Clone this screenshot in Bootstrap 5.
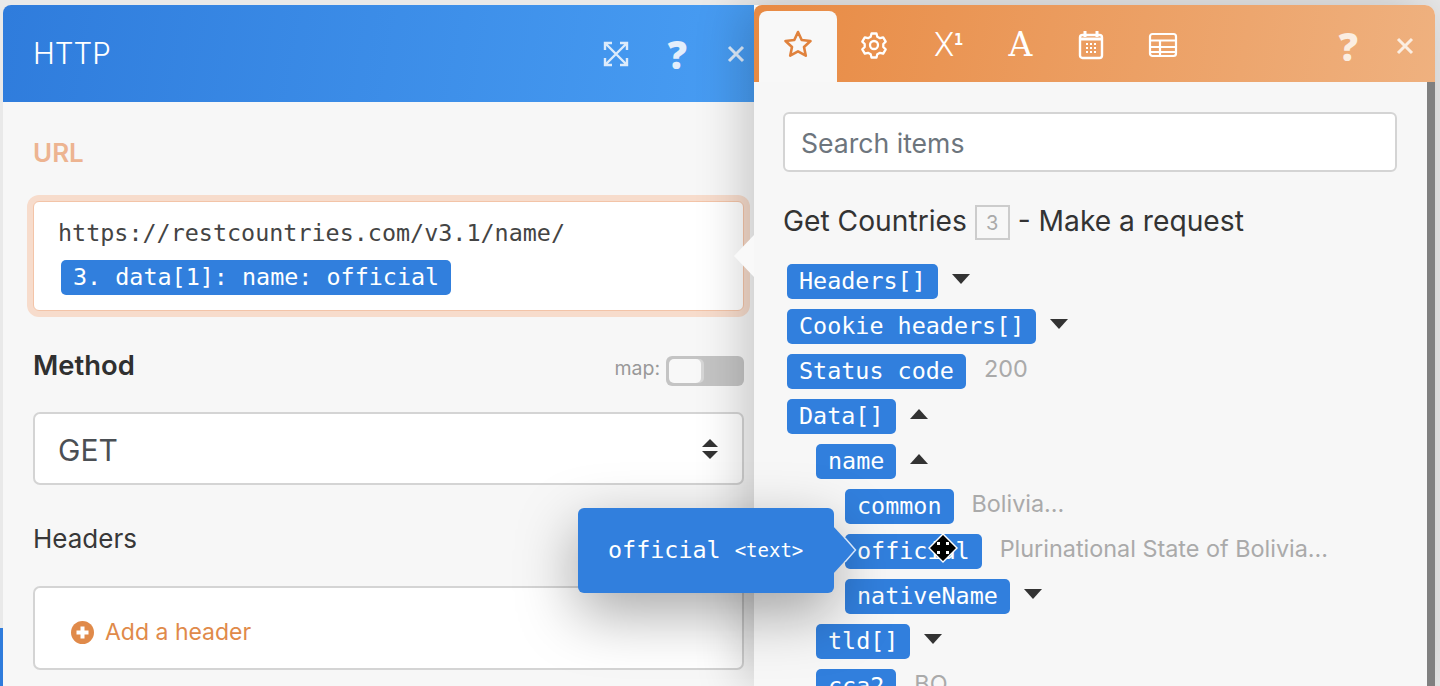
<!DOCTYPE html>
<html lang="en">
<head>
  <meta charset="UTF-8" />
  <meta name="viewport" content="width=device-width, initial-scale=1.0"/>
  <title>HTTP module mapping</title>
  <link href="https://cdn.jsdelivr.net/npm/bootstrap@5.3.3/dist/css/bootstrap.min.css" rel="stylesheet">
  <style>
    html, body { height: 686px; overflow: hidden; }
    body { background: #e9e9e9; font-family: Inter, "Noto Sans", sans-serif; color: #333; }
    .stage { height: 686px; padding: 5px 5px 0 3px; position: relative; }

    /* left window */
    .http-win { width: 751px; flex: none; background: #f7f7f7; border-top-left-radius: 8px; }
    .http-head { height: 97px; padding: 0 8px 0 30px; color: #fff; background: linear-gradient(100deg, #2f7cdc, #489df3); border-top-left-radius: 8px; }
    .http-title { font-size: 29.5px; font-weight: 300; }
    .head-tools { gap: 39px; }
    .http-body { padding: 36px 10px 0 30px; }
    .url-label { font-size: 26px; line-height: 30px; font-weight: 600; color: #edb491; margin-bottom: 33px; }
    .url-box { height: 110px; background: #fff; border: 1px solid #f3c4a8; border-radius: 6px; box-shadow: 0 0 0 6px #f7dccc; padding: 14px 24px 0; }
    .url-text { font-family: "DejaVu Sans Mono", monospace; font-size: 23.4px; line-height: 34px; color: #444; }
    .url-chip { margin: 10px 0 0 3px; }
    .field-row { height: 44px; margin-top: 32px; padding-top: 2px; }
    .field-bold { font-size: 27.4px; font-weight: 600; color: #303030; }
    .map-wrap { margin-top: 10px; }
    .map-lbl { font-size: 19.5px; color: #999; margin: -4px 2px 0 0; }
    .map-toggle { width: 78px; height: 30px; background: #c4c4c4; border-radius: 6px; padding: 3px; }
    .map-knob { width: 32px; height: 24px; background: #f8f8f8; border-radius: 5px; box-shadow: 3px 0 0 #d6d6d6; }
    .get-select.form-select { height: 73px; margin-top: 25px; font-size: 30px; color: #4b4f54; padding: 4px 0 0 23px; border: 2px solid #d4d4d4; border-radius: 7px;
      background-image: url("data:image/svg+xml,%3csvg xmlns='http://www.w3.org/2000/svg' viewBox='0 0 18 20'%3e%3cpath fill='%23333' d='M9 0l8 8H1zM9 20l-8-8h16z'/%3e%3c/svg%3e");
      background-size: 18px 20px; background-position: right 23px center; }
    .field-plain { font-size: 26px; color: #383838; margin-top: 37px; line-height: 34px; }
    .hdr-box { height: 84px; margin-top: 30px; background: #fff; border: 2px solid #d4d4d4; border-radius: 7px; padding: 8px 0 0 36px; color: #e08a4a; font-size: 23px; }
    .hdr-box svg { margin-right: 3px; }

    /* right window */
    .items-win { flex: 1; background: #f7f7f7; border-top-right-radius: 10px; box-shadow: -10px 0 50px rgba(0,0,0,.2); position: relative; }
    .items-head { height: 77px; padding: 6px 20px 0 5px; background: linear-gradient(100deg, #e88a43, #efb17f); border-top-right-radius: 10px; border-top-left-radius: 8px; }
    .tab-on { width: 78px; height: 71px; margin-right: 1px; padding-bottom: 5px; background: #f8f8f8; border-radius: 8px 8px 0 0; }
    .tab-off { width: 72px; height: 71px; padding-bottom: 4px; color: #fff; }
    .tab-glyph { padding-left: 5px; }
    .tab-svg { padding-left: 2px; }
    .tools-right { gap: 37px; }
    .glyph-x { font-family: Roboto, sans-serif; font-weight: 300; font-size: 33px; line-height: 1; color: #fff; }
    .glyph-x sup { font-family: "DejaVu Sans Mono", monospace; font-weight: 700; font-size: 15px; top: -.75em; }
    .glyph-a { font-family: "DejaVu Serif", serif; font-size: 33px; line-height: 1; color: #fff; }
    .q-mark { font-family: "Open Sans", sans-serif; font-weight: 800; font-size: 38px; line-height: 1; }
    .q-blue { color: #e3eefb; }
    .q-orange { color: #fbeee2; }
    .items-notch { position: absolute; left: -20px; top: 230px; width: 0; height: 0; border-top: 21px solid transparent; border-bottom: 21px solid transparent; border-right: 20px solid #f9f9f9; }
    .items-body { padding: 30px 38px 0 29px; }
    .item-search.form-control { height: 60px; font-size: 26.6px; padding: 2px 0 0 16px; border: 2px solid #d4d4d4; border-radius: 6px; color: #555; }
    .item-search.form-control::placeholder { color: #6d757d; }
    .src-title { font-size: 28.2px; margin: 31px 0 25px; height: 36px; line-height: 36px; color: #333; }
    .src-num { display: inline-block; width: 35px; height: 35px; margin-top: 2px; line-height: 33px; border: 2px solid #ccc; text-align: center; font-size: 20px; color: #aaa; vertical-align: top; }
    .tree { padding-left: 4px; }
    .tree-row { height: 35px; margin-bottom: 10px; }
    .ind-1 { padding-left: 29px; }
    .ind-2 { padding-left: 58px; }
    .chip { display: inline-block; height: 35px; line-height: 34px; padding: 0 12px; background: #317fdd; color: #fff; border-radius: 5px; font-family: "DejaVu Sans Mono", monospace; font-size: 23.4px; white-space: nowrap; }
    .val { margin: -5px 0 0 18px; font-size: 23.4px; color: #aaa; white-space: nowrap; }
    .caret-d, .caret-u { margin: -6px 0 0 14px; width: 0; height: 0; border-left: 9px solid transparent; border-right: 9px solid transparent; }
    .caret-d { border-top: 10px solid #333; }
    .caret-u { border-bottom: 10px solid #333; }
    .scroll-thumb { position: absolute; right: 0; top: 77px; bottom: 0; width: 8px; background: #808080; }

    /* hover tooltip and cursor */
    .map-tip { position: absolute; left: 578px; top: 508px; width: 256px; height: 85px; background: #317fdd; color: #fff; border-radius: 6px; padding-left: 30px; font-family: "DejaVu Sans Mono", monospace; font-size: 23.4px; box-shadow: 0 20px 60px rgba(0,0,0,.35); }
    .map-tip small { font-size: 19px; margin-left: 14px; }
    .tip-arrow { position: absolute; left: 833px; top: 526px; }
    .move-cur { position: absolute; left: 928px; top: 533px; }
    .edge-blue { position: absolute; left: 0; top: 628px; width: 3px; height: 58px; background: #2f7cdc; }
  </style>
</head>
<body>
  <div class="stage d-flex">
    <div class="edge-blue"></div>

    <div class="http-win">
      <div class="http-head d-flex align-items-center">
        <span class="http-title flex-grow-1">HTTP</span>
        <div class="head-tools d-flex align-items-center">
          <svg width="26" height="26" viewBox="0 0 26 26" fill="none" stroke="#dcebfb" stroke-width="2.4"><path d="M3 3 23 23M23 3 3 23M2 9V2h7M17 2h7v7M2 17v7h7M24 17v7h-7"/></svg>
          <span class="q-mark q-blue">?</span>
          <svg width="20" height="20" viewBox="0 0 20 20" stroke="#dcebfb" stroke-width="3"><path d="M3 3 17 17M17 3 3 17"/></svg>
        </div>
      </div>
      <div class="http-body">
        <div class="url-label">URL</div>
        <div class="url-box">
          <div class="url-text">https://restcountries.com/v3.1/name/</div>
          <span class="chip url-chip">3. data[1]: name: official</span>
        </div>
        <div class="field-row d-flex align-items-center justify-content-between">
          <span class="field-bold">Method</span>
          <span class="map-wrap d-flex align-items-center gap-1">
            <span class="map-lbl">map:</span>
            <span class="map-toggle"><span class="map-knob d-block"></span></span>
          </span>
        </div>
        <select class="form-select get-select"><option>GET</option></select>
        <div class="field-plain">Headers</div>
        <div class="hdr-box d-flex align-items-center gap-2">
          <svg width="23" height="23" viewBox="0 0 23 23"><circle cx="11.5" cy="11.5" r="11.5" fill="#e08a4a"/><path d="M11.5 5.5v12M5.5 11.5h12" stroke="#fff" stroke-width="4"/></svg>
          <span>Add a header</span>
        </div>
      </div>
    </div>

    <div class="items-win">
      <div class="items-notch"></div>
      <div class="items-head d-flex">
        <div class="tab-on d-flex align-items-center justify-content-center">
          <svg width="30" height="30" viewBox="0 0 30 30" fill="none" stroke="#e0823d" stroke-width="2.6" stroke-linejoin="round"><path d="M15 3l3.7 8 8.8 1-6.5 6 1.8 8.7L15 22.3l-7.8 4.4L9 18l-6.5-6 8.8-1z"/></svg>
        </div>
        <div class="tab-off d-flex align-items-center justify-content-center">
          <svg width="28" height="28" viewBox="0 0 28 28" fill="none" stroke="#fff" stroke-width="2.3" stroke-linejoin="round"><path d="M11.5 2.5h5l.8 3.2 2.7 1.500 3.200-.9 2.500 4.300-2.400 2.400v3l2.400 2.400-2.500 4.300-3.200-.9-2.700 1.500-.8 3.200h-5l-.8-3.200-2.700-1.500-3.200.9-2.500-4.300 2.400-2.400v-3L2.300 10.600l2.500-4.300 3.200.9 2.700-1.500z"/><circle cx="14" cy="14" r="4"/></svg>
        </div>
        <div class="tab-off tab-glyph d-flex align-items-center justify-content-center"><span class="glyph-x">X<sup>1</sup></span></div>
        <div class="tab-off tab-glyph d-flex align-items-center justify-content-center"><span class="glyph-a">A</span></div>
        <div class="tab-off tab-svg d-flex align-items-center justify-content-center">
          <svg width="26" height="30" viewBox="0 0 26 30" fill="none" stroke="#fff" stroke-width="2.4"><rect x="2" y="5" width="22" height="23" rx="2.5"/><path d="M7 1v6M19 1v6" stroke-width="3"/><path d="M2 9h22" stroke-width="3"/><path d="M8 14h2M12 14h2M16 14h2M8 18h2M12 18h2M16 18h2M8 22h2M12 22h2M16 22h2" stroke-width="2.2"/></svg>
        </div>
        <div class="tab-off tab-svg d-flex align-items-center justify-content-center">
          <svg width="30" height="26" viewBox="0 0 30 26" fill="none" stroke="#fff" stroke-width="2.2"><rect x="2" y="2" width="26" height="22" rx="2.5"/><path d="M2 8.500h26M2 15h26M2 20h26M12 8.500V24"/></svg>
        </div>
        <div class="flex-grow-1"></div>
        <div class="tools-right d-flex align-items-center align-self-start mt-3">
          <span class="q-mark q-orange">?</span>
          <svg width="20" height="20" viewBox="0 0 20 20" stroke="#fbeee2" stroke-width="3"><path d="M3 3 17 17M17 3 3 17"/></svg>
        </div>
      </div>
      <div class="items-body">
        <input class="form-control item-search" placeholder="Search items">
        <div class="src-title">Get Countries <span class="src-num">3</span> - Make a request</div>
        <div class="tree">
          <div class="tree-row d-flex align-items-center"><span class="chip">Headers[]</span><span class="caret-d"></span></div>
          <div class="tree-row d-flex align-items-center"><span class="chip">Cookie headers[]</span><span class="caret-d"></span></div>
          <div class="tree-row d-flex align-items-center"><span class="chip">Status code</span><span class="val">200</span></div>
          <div class="tree-row d-flex align-items-center"><span class="chip">Data[]</span><span class="caret-u"></span></div>
          <div class="tree-row d-flex align-items-center ind-1"><span class="chip">name</span><span class="caret-u"></span></div>
          <div class="tree-row d-flex align-items-center ind-2"><span class="chip">common</span><span class="val">Bolivia...</span></div>
          <div class="tree-row d-flex align-items-center ind-2"><span class="chip">official</span><span class="val">Plurinational State of Bolivia...</span></div>
          <div class="tree-row d-flex align-items-center ind-2"><span class="chip">nativeName</span><span class="caret-d"></span></div>
          <div class="tree-row d-flex align-items-center ind-1"><span class="chip">tld[]</span><span class="caret-d"></span></div>
          <div class="tree-row d-flex align-items-center ind-1"><span class="chip">cca2</span><span class="val">BO</span></div>
        </div>
      </div>
      <div class="scroll-thumb"></div>
    </div>

    <div class="map-tip d-flex align-items-center"><span>official</span><small>&lt;text&gt;</small></div>
    <svg class="tip-arrow" width="24" height="48" viewBox="0 0 24 48"><path d="M0 0 22 24 0 48Z" fill="#317fdd"/><path d="M12 12 22.5 24 12 36" fill="none" stroke="#d5e6fa" stroke-width="1.5"/></svg>
    <svg class="move-cur" width="30" height="30" viewBox="0 0 30 30">
      <path d="M15 0 30 15 15 30 0 15Z" fill="#fff"/>
      <path d="M15 2 22 9H18V12H21V8L28 15 21 22V18H18V21H22L15 28 8 21H12V18H9V22L2 15 9 8V12H12V9H8Z" fill="#000"/>
    </svg>
  </div>
  <script src="https://cdn.jsdelivr.net/npm/bootstrap@5.3.3/dist/js/bootstrap.bundle.min.js"></script>
</body>
</html>
